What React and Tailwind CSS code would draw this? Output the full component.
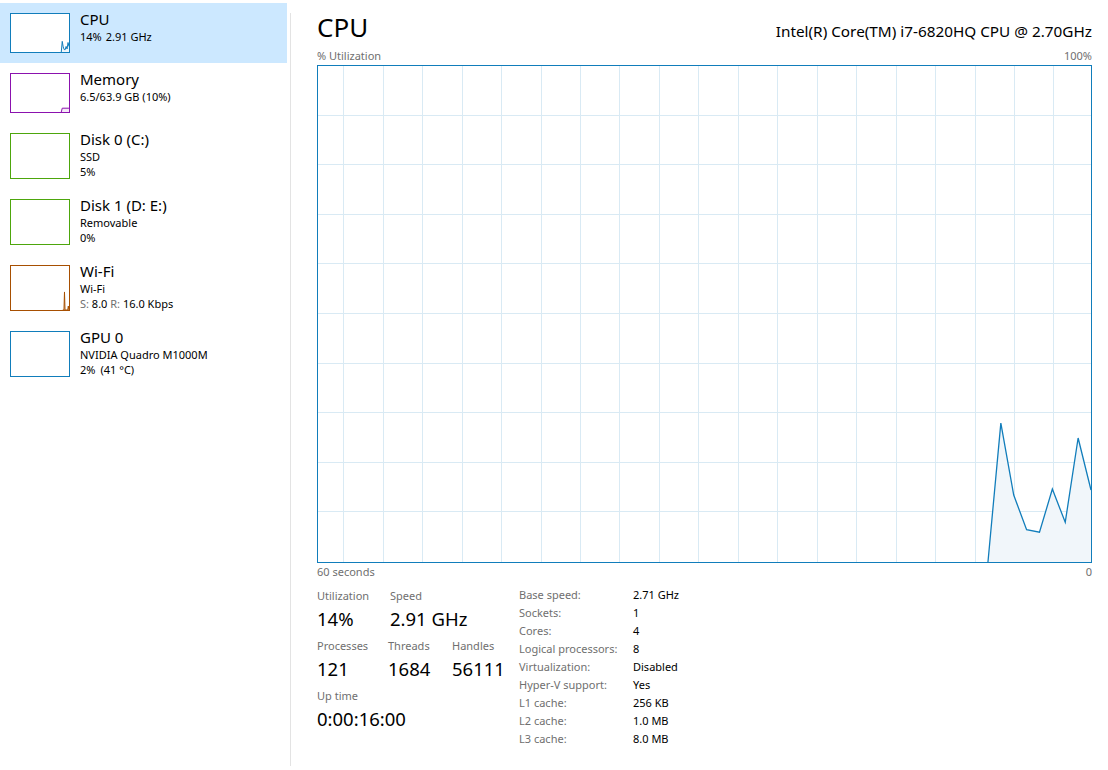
import React from 'react'

// last samples of the cpu graph, oldest first (percent)
const cpuData = [0, 28, 13.5, 6.5, 6, 14.7, 8, 25, 14.5]
const W = 773
const H = 496
const STEP = 12.88

function toPoints(data) {
    const n = data.length
    return data.map((v, i) => [W - (n - 1 - i) * STEP, H * (1 - v / 100)])
}

function Area({ pts, stroke, fill, width = 1.3 }) {
    const line = pts.map(p => p.join(',')).join(' ')
    const area = `${line} ${pts[pts.length - 1][0]},${H} ${pts[0][0]},${H}`
    return (
        <>
            <polygon points={area} fill={fill} />
            <polyline points={line} fill="none" stroke={stroke} strokeWidth={width} vectorEffect="non-scaling-stroke" strokeLinejoin="miter" />
        </>
    )
}

function Thumb({ className, children }) {
    return (
        <div className={`shrink-0 w-[60px] border bg-white ${className}`}>
            <svg viewBox={`0 0 ${W} ${H}`} preserveAspectRatio="none" className="block w-full h-full">
                {children}
            </svg>
        </div>
    )
}

function SideItem({ thumb, title, children, selected }) {
    return (
        <div className={`flex items-start pl-[10px] py-[10px] ${selected ? 'bg-[#cce8ff]' : ''}`}>
            {thumb}
            <div className="ml-[10px] -mt-[4px]">
                <div className="text-[15px] leading-[20px] text-black">{title}</div>
                <div className="text-[11px] leading-[15px] text-black">{children}</div>
            </div>
        </div>
    )
}

function Sidebar() {
    const memPts = [[W - 8 * STEP, H], [W - 7 * STEP, H * 0.9], [W, H * 0.9]]
    const wifiPts = [[690, H], [706, H], [713, H * 0.59], [720, H], [756, H], [764, H * 0.91], [772, H]]
    return (
        <div className="w-[287px] pt-[3px] shrink-0">
            <SideItem selected title="CPU" thumb={
                <Thumb className="h-[40px] border-[#117dbb]">
                    <Area pts={toPoints(cpuData)} stroke="#117dbb" fill="#f1f6fa" width={1} />
                </Thumb>
            }>
                <div>14%<span className="ml-[4px]">2.91 GHz</span></div>
            </SideItem>
            <SideItem title="Memory" thumb={
                <Thumb className="h-[40px] border-[#8b12ae]">
                    <Area pts={memPts} stroke="#8b12ae" fill="#f4eaf7" width={1} />
                </Thumb>
            }>
                <div>6.5/63.9 GB (10%)</div>
            </SideItem>
            <SideItem title="Disk 0 (C:)" thumb={<Thumb className="h-[46px] border-[#4da60c]" />}>
                <div>SSD</div>
                <div>5%</div>
            </SideItem>
            <SideItem title="Disk 1 (D: E:)" thumb={<Thumb className="h-[46px] border-[#4da60c]" />}>
                <div>Removable</div>
                <div>0%</div>
            </SideItem>
            <SideItem title="Wi-Fi" thumb={
                <Thumb className="h-[46px] border-[#a74f01]">
                    <Area pts={wifiPts} stroke="#a74f01" fill="#f6e6d8" width={1} />
                </Thumb>
            }>
                <div>Wi-Fi</div>
                <div><span className="text-[#6f6f6f]">S:</span> 8.0 <span className="text-[#6f6f6f]">R:</span> 16.0 Kbps</div>
            </SideItem>
            <SideItem title="GPU 0" thumb={<Thumb className="h-[46px] border-[#117dbb]" />}>
                <div>NVIDIA Quadro M1000M</div>
                <div>2%<span className="ml-[5px]">(41 °C)</span></div>
            </SideItem>
        </div>
    )
}

function Graph() {
    const vLines = Array.from({ length: 19 }, (_, k) => Math.round(25.3 + k * 39.45) + 0.5)
    const hLines = Array.from({ length: 9 }, (_, k) => Math.round((k + 1) * 49.6) - 0.5)
    return (
        <div className="mt-[2px] h-[498px] border border-[#117dbb] bg-white">
            <svg viewBox={`0 0 ${W} ${H}`} preserveAspectRatio="none" className="block w-full h-full">
                {vLines.map(x => <line key={'v' + x} x1={x} x2={x} y1={0} y2={H} stroke="#d9eaf4" strokeWidth="1" shapeRendering="crispEdges" />)}
                {hLines.map(y => <line key={'h' + y} x1={0} x2={W} y1={y} y2={y} stroke="#d9eaf4" strokeWidth="1" shapeRendering="crispEdges" />)}
                <Area pts={toPoints(cpuData)} stroke="#117dbb" fill="#f1f6fa" width={1.3} />
            </svg>
        </div>
    )
}

function Stat({ label, value, className }) {
    return (
        <div className={className}>
            <div className="text-[11px] leading-[15px] text-[#6f6f6f]">{label}</div>
            <div className="mt-[4px] text-[18.5px] leading-[24px] text-black">{value}</div>
        </div>
    )
}

const specs = [
    ['Base speed:', '2.71 GHz'],
    ['Sockets:', '1'],
    ['Cores:', '4'],
    ['Logical processors:', '8'],
    ['Virtualization:', 'Disabled'],
    ['Hyper-V support:', 'Yes'],
    ['L1 cache:', '256 KB'],
    ['L2 cache:', '1.0 MB'],
    ['L3 cache:', '8.0 MB'],
]

export default function App() {
    return (
        <div className="flex h-[770px] w-[1108px] bg-white font-['Noto_Sans',sans-serif] overflow-hidden">
            <Sidebar />
            <div className="ml-[3px] mt-[13px] mb-[4px] w-px bg-[#e3e3e3] shrink-0" />
            <div className="flex-1 pl-[26px] pr-[16px] pt-[11px]">
                <div className="flex items-baseline justify-between">
                    <h1 className="text-[26px] leading-[32px] text-black">CPU</h1>
                    <span className="text-[15.3px] text-black">Intel(R) Core(TM) i7-6820HQ CPU @ 2.70GHz</span>
                </div>
                <div className="mt-[5px] flex justify-between text-[11px] leading-[15px] text-[#6f6f6f]">
                    <span>% Utilization</span>
                    <span>100%</span>
                </div>
                <Graph />
                <div className="mt-[1px] flex justify-between text-[11px] leading-[15px] text-[#6f6f6f]">
                    <span>60 seconds</span>
                    <span>0</span>
                </div>
                <div className="mt-[9px] flex items-start">
                    <div className="w-[202px] flex flex-col gap-[7px]">
                        <div className="flex">
                            <Stat className="w-[73px]" label="Utilization" value="14%" />
                            <Stat label="Speed" value="2.91 GHz" />
                        </div>
                        <div className="flex">
                            <Stat className="w-[71px]" label="Processes" value="121" />
                            <Stat className="w-[64px]" label="Threads" value="1684" />
                            <Stat label="Handles" value="56111" />
                        </div>
                        <Stat label="Up time" value="0:00:16:00" />
                    </div>
                    <div className="-mt-[2px] grid grid-cols-[114px_auto] text-[11px] leading-[18px]">
                        {specs.map(([k, v]) => (
                            <React.Fragment key={k}>
                                <span className="text-[#6f6f6f]">{k}</span>
                                <span className="text-black">{v}</span>
                            </React.Fragment>
                        ))}
                    </div>
                </div>
            </div>
        </div>
    )
}
